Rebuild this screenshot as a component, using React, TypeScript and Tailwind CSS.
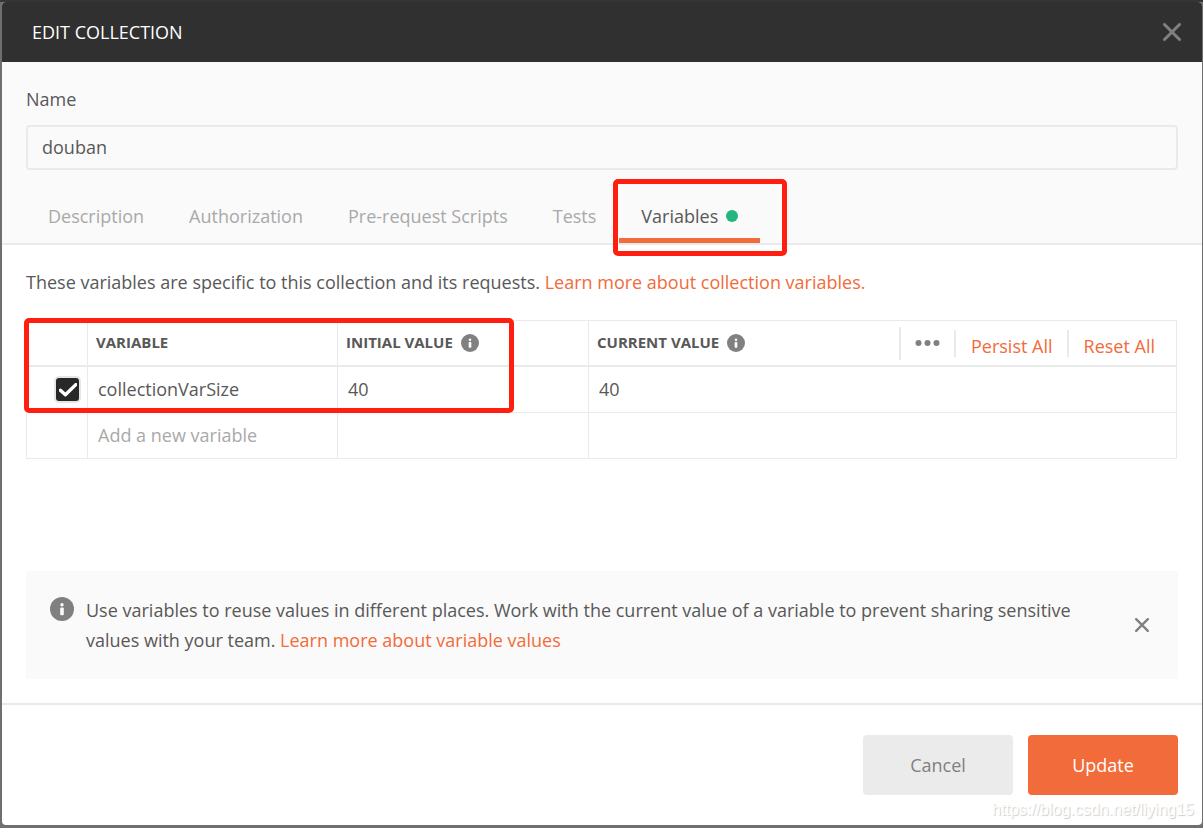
import React, { useState } from 'react';

interface Variable {
  key: string;
  initialValue: string;
  currentValue: string;
  enabled: boolean;
}

const tabs = ['Description', 'Authorization', 'Pre-request Scripts', 'Tests', 'Variables'];

function InfoIcon({ className = '' }: { className?: string }) {
  return (
    <svg viewBox="0 0 24 24" className={`shrink-0 ${className}`} aria-hidden="true">
      <circle cx="12" cy="12" r="12" fill="#808080" />
      <circle cx="12" cy="7.8" r="1.7" fill="#fafafa" />
      <rect x="10.2" y="10.6" width="3.6" height="7.6" rx="1" fill="#fafafa" />
    </svg>
  );
}

function CloseIcon({ className = '' }: { className?: string }) {
  return (
    <svg viewBox="0 0 18 18" className={className} fill="none" stroke="#808080" strokeWidth="3" strokeLinecap="round" aria-hidden="true">
      <path d="M1.5 1.5 16.5 16.5M16.5 1.5 1.5 16.5" />
    </svg>
  );
}

function Highlight({ className = '' }: { className?: string }) {
  return <span className={`pointer-events-none absolute rounded-[5px] border-[5px] border-[#ff1e10] ${className}`} />;
}

function VariablesTable() {
  const [rows, setRows] = useState<Variable[]>([
    { key: 'collectionVarSize', initialValue: '40', currentValue: '40', enabled: true },
  ]);

  const updateRow = (index: number, patch: Partial<Variable>) => {
    setRows(rows.map((row, i) => (i === index ? { ...row, ...patch } : row)));
  };

  const cell = 'border-r border-b border-[#eaeaea] last:border-r-0';
  const lastCell = 'border-r border-[#eaeaea] last:border-r-0';
  const field = 'block w-full bg-transparent px-[10px] pb-[2px] leading-6 outline-none placeholder:text-[#a9a9a9]';
  const heading = 'border-r border-b-2 border-[#eaeaea] px-2 text-left text-[15px] font-bold last:border-r-0';

  return (
    <div className="relative mr-px">
      <table className="w-full table-fixed border-separate border-spacing-0 border border-[#eaeaea]">
        <colgroup>
          <col className="w-[61px]" />
          <col className="w-[250px]" />
          <col className="w-[251px]" />
          <col />
        </colgroup>
        <thead>
          <tr className="h-[46px]">
            <th className={heading} aria-label="Enabled" />
            <th className={heading}>VARIABLE</th>
            <th className={heading}>
              <div className="flex items-center gap-2">
                INITIAL VALUE
                <InfoIcon className="size-[18px]" />
              </div>
            </th>
            <th className={heading}>
              <div className="flex items-center gap-2">
                CURRENT VALUE
                <InfoIcon className="size-[18px]" />
                <div className="ml-auto flex items-center text-lg leading-[26px] font-normal text-[#f26b3a]">
                  <button type="button" aria-label="More options" className="flex h-[33px] items-center border-l-2 border-[#eaeaea] px-[14px]">
                    <svg viewBox="0 0 24 6" className="h-[6px] w-[25px]" fill="#808080">
                      <circle cx="3" cy="3" r="3" />
                      <circle cx="12" cy="3" r="3" />
                      <circle cx="21" cy="3" r="3" />
                    </svg>
                  </button>
                  <button type="button" className="h-[27px] border-l-2 border-[#eaeaea] pt-[3px] pr-[14px] pl-[15px]">Persist All</button>
                  <button type="button" className="h-[27px] border-l-2 border-[#eaeaea] pt-[3px] pr-[13px] pl-[15px]">Reset All</button>
                </div>
              </div>
            </th>
          </tr>
        </thead>
        <tbody>
          {rows.map((row, i) => (
            <tr key={i} className="h-[46px]">
              <td className={cell}>
                <div className="mr-[6px] ml-auto grid size-[27px] place-items-center">
                  <input
                    type="checkbox"
                    aria-label="Enable variable"
                    checked={row.enabled}
                    onChange={(e) => updateRow(i, { enabled: e.target.checked })}
                    className="peer col-start-1 row-start-1 size-[27px] appearance-none rounded-[5px] border-2 border-[#e6e6e6] checked:bg-[#282828]"
                  />
                  <svg viewBox="0 0 18 14" className="pointer-events-none col-start-1 row-start-1 hidden h-[14px] w-[18px] peer-checked:block" fill="none" stroke="#fff" strokeWidth="3.4">
                    <path d="M1.4 7.2 6.4 11.8 16.8 1.6" strokeLinecap="round" strokeLinejoin="round" />
                  </svg>
                </div>
              </td>
              <td className={cell}>
                <input aria-label="Variable" className={field} value={row.key} onChange={(e) => updateRow(i, { key: e.target.value })} />
              </td>
              <td className={cell}>
                <input aria-label="Initial value" className={field} value={row.initialValue} onChange={(e) => updateRow(i, { initialValue: e.target.value })} />
              </td>
              <td className={cell}>
                <input aria-label="Current value" className={field} value={row.currentValue} onChange={(e) => updateRow(i, { currentValue: e.target.value })} />
              </td>
            </tr>
          ))}
          <tr className="h-[45px]">
            <td className={lastCell} />
            <td className={lastCell}>
              <input aria-label="New variable" className={field} placeholder="Add a new variable" />
            </td>
            <td className={lastCell}>
              <input aria-label="New initial value" className={field} />
            </td>
            <td className={lastCell}>
              <input aria-label="New current value" className={field} />
            </td>
          </tr>
        </tbody>
      </table>
      <Highlight className="-top-[2px] -left-[2px] h-[95px] w-[490px]" />
    </div>
  );
}

export default function App() {
  const [name, setName] = useState('douban');
  const [activeTab, setActiveTab] = useState('Variables');

  return (
    <div className="flex min-h-screen flex-col border-t-2 border-[#353535] bg-[#6f6f6f] pr-px pb-[3px] pl-[2px] font-['Open_Sans','Noto_Sans',sans-serif] text-lg text-[#585858]">
      <div role="dialog" aria-labelledby="dialog-title" className="relative flex flex-1 flex-col overflow-hidden rounded-[4px] bg-white">
        {/* Title bar */}
        <header className="flex h-[60px] items-center justify-between bg-[#303030] pr-[21px] pl-[30px]">
          <h1 id="dialog-title" className="text-lg text-white">EDIT COLLECTION</h1>
          <button type="button" aria-label="Close">
            <CloseIcon className="size-[18px]" />
          </button>
        </header>

        {/* Name and tabs */}
        <div className="border-b-2 border-[#eaeaea] bg-[#fafafa] px-6 pt-6">
          <label htmlFor="collection-name" className="block leading-[27px]">Name</label>
          <input
            id="collection-name"
            value={name}
            onChange={(e) => setName(e.target.value)}
            className="mt-3 block h-[45px] w-full rounded-[4px] border-2 border-[#eaeaea] bg-transparent px-[14px] pb-[2px] outline-none"
          />
          <div role="tablist" className="mt-5 flex gap-px">
            {tabs.map((tab) => (
              <div key={tab} className="relative">
                <button
                  type="button"
                  role="tab"
                  aria-selected={activeTab === tab}
                  onClick={() => setActiveTab(tab)}
                  className={`flex h-[53px] items-center gap-2 border-b-[5px] px-[22px] pt-1 ${
                    activeTab === tab ? 'border-[#f26b3a]' : 'border-transparent text-[#a9a9a9]'
                  }`}
                >
                  {tab}
                  {tab === 'Variables' && <span className="size-3 rounded-full bg-[#26b47f]" />}
                </button>
                {tab === 'Variables' && <Highlight className="-top-[11px] -left-[6px] h-[77px] w-[174px]" />}
              </div>
            ))}
          </div>
        </div>

        {/* Variables panel */}
        <main className="flex flex-1 flex-col px-6 pt-6 pb-6">
          <p className="mb-6 leading-[27px]">
            These variables are specific to this collection and its requests.{' '}
            <a href="#collection-variables" className="text-[#f26b3a]">Learn more about collection variables.</a>
          </p>
          <VariablesTable />

          <div className="mt-auto flex items-center bg-[#fafafa] py-6 pr-[29px] pl-6">
            <InfoIcon className="mt-[2px] size-6 self-start" />
            <p className="mr-14 ml-3 flex-1 leading-[30px]">
              Use variables to reuse values in different places. Work with the current value of a variable to prevent sharing sensitive values with your team.{' '}
              <a href="#variable-values" className="text-[#f26b3a]">Learn more about variable values</a>
            </p>
            <button type="button" aria-label="Dismiss">
              <CloseIcon className="size-[14px]" />
            </button>
          </div>
        </main>

        {/* Actions */}
        <footer className="flex justify-end gap-[15px] border-t-2 border-[#eaeaea] px-6 py-[30px]">
          <button type="button" className="h-[60px] w-[150px] rounded-[4px] bg-[#ebebeb] text-[#808080]">Cancel</button>
          <button type="button" className="h-[60px] w-[150px] rounded-[4px] bg-[#f26b3a] text-white">Update</button>
        </footer>

        <span className="pointer-events-none absolute right-2 bottom-[3px] font-['Liberation_Sans',sans-serif] text-base text-white [text-shadow:1px_1px_1px_#ccc]">
          https://blog.csdn.net/liying15
        </span>
      </div>
    </div>
  );
}
